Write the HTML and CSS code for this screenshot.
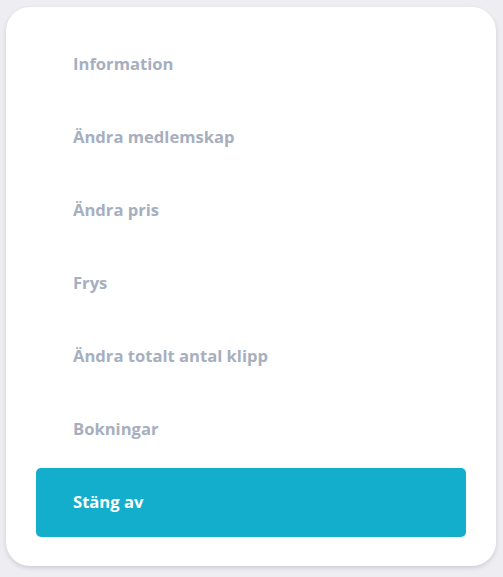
FILE: index.html
```html
<!DOCTYPE html>
<html lang="sv">
<head>
    <meta charset="UTF-8">
    <title>Medlemskap</title>
    <link rel="stylesheet" href="styles.css">
</head>
<body>
    <nav class="menu">
        <a class="menu-item" href="#">Information</a>
        <a class="menu-item" href="#">Ändra medlemskap</a>
        <a class="menu-item" href="#">Ändra pris</a>
        <a class="menu-item" href="#">Frys</a>
        <a class="menu-item" href="#">Ändra totalt antal klipp</a>
        <a class="menu-item" href="#">Bokningar</a>
        <a class="menu-item active" href="#">Stäng av</a>
    </nav>
</body>
</html>
```

FILE: styles.css
```css
body {
    font-family: "Open Sans", Arial, sans-serif;
    background: #ededf2;
    margin: 0;
    padding: 7px 7px 11px 6px;
}
.menu {
    background: #fff;
    border-radius: 24px;
    box-shadow: 0 2px 4px rgba(60,64,90,0.18);
    padding: 23px 30px 29px 30px;
    display: flex;
    flex-direction: column;
    gap: 4px;
}
.menu-item {
    display: flex;
    align-items: center;
    height: 69px;
    box-sizing: border-box;
    padding: 0 0 3px 37px;
    border-radius: 5px;
    color: #a7afbf;
    font-weight: 700;
    font-size: 16.6px;
    text-decoration: none;
}
.menu-item.active {
    background: #14aecd;
    color: #fff;
}
```
